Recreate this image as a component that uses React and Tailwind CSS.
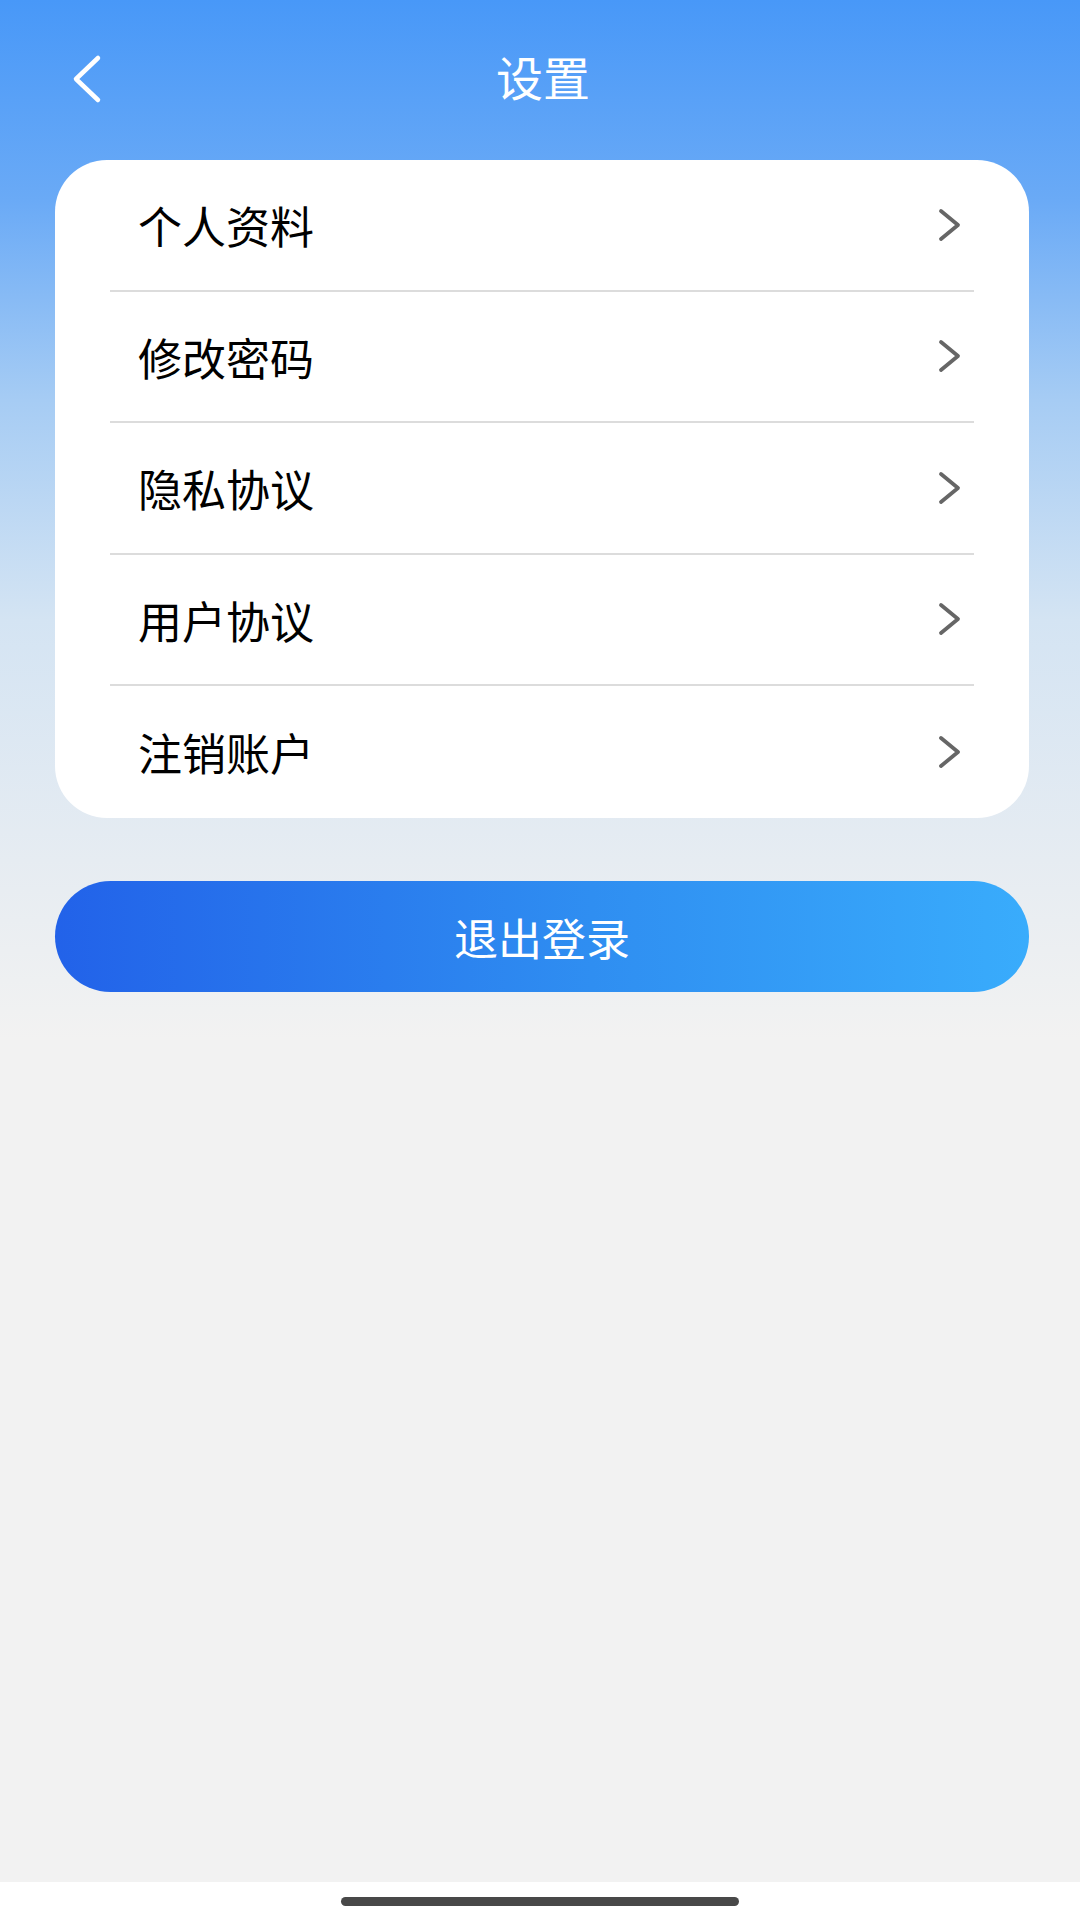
const items = ["个人资料", "修改密码", "隐私协议", "用户协议", "注销账户"];

const Chevron = () => (
  <svg width="24" height="34" viewBox="0 0 24 34" fill="none">
    <path d="M3 3 L20 17 L3 31" stroke="#666666" strokeWidth="3.8" strokeLinecap="round" strokeLinejoin="round" />
  </svg>
);

const App = () => {
  return (
    <div
      className="w-[1080px] h-[1920px] flex flex-col bg-[linear-gradient(180deg,#4898f8_0px,#6aaaf6_200px,#a6ccf4_400px,#d4e4f3_620px,#e6ecf2_860px,#f2f2f2_1040px,#f2f2f2_100%)]"
      style={{ fontFamily: '"Noto Sans CJK SC", "Noto Sans", sans-serif' }}
    >
      <div className="h-[160px] flex items-start pt-[52px] px-[68px] relative">
        <svg width="40" height="50" viewBox="0 0 40 50" fill="none" className="mt-[2px]">
          <path d="M30 4 L8 25 L30 46" stroke="#ffffff" strokeWidth="4.5" strokeLinecap="round" strokeLinejoin="round" />
        </svg>
        <div className="absolute left-[6px] right-0 top-[46px] text-center text-white text-[47px] leading-[60px]">设置</div>
      </div>

      <div className="ml-[55px] w-[974px] bg-white rounded-[52px] px-[55px]">
        {items.map((t, i) => (
          <div
            key={t}
            className={
              "flex items-center justify-between h-[131.5px] pl-[28px] pr-[12px] " +
              (i < items.length - 1 ? "border-b-2 border-[#dcdcdc]" : "")
            }
          >
            <span className="text-[44px] text-black leading-none pt-[1px]">{t}</span>
            <Chevron />
          </div>
        ))}
      </div>

      <div className="ml-[55px] w-[974px] mt-[63px] h-[111px] rounded-full bg-[linear-gradient(90deg,#2262e9,#2f8ef1_55%,#39acfc)] flex items-center justify-center">
        <span className="text-white text-[44px] leading-none pt-[2px]">退出登录</span>
      </div>

      <div className="flex-1" />
      <div className="h-[38px] bg-white flex justify-center pt-[15px]">
        <div className="w-[398px] h-[9px] rounded-full bg-[#484848]" />
      </div>
    </div>
  );
};

export default App;
